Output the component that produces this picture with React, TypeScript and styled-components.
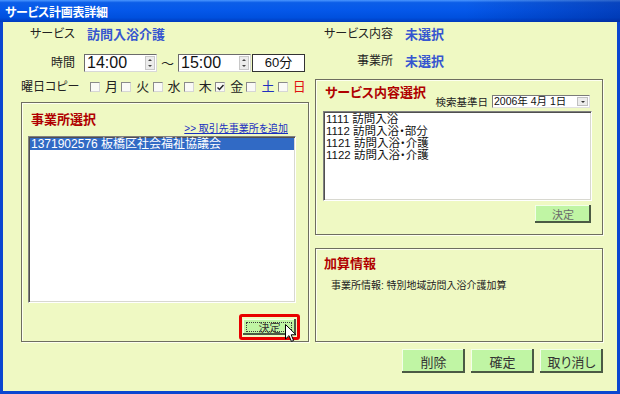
import styled, { createGlobalStyle } from "styled-components";

const GlobalStyle = createGlobalStyle`
  html, body {
    margin: 0;
    padding: 0;
  }
  body {
    width: 620px;
    height: 394px;
    overflow: hidden;
    font-family: "Liberation Sans", "Noto Sans CJK JP", sans-serif;
    font-feature-settings: "palt";
    color: #222;
  }
  * {
    box-sizing: border-box;
  }
`;

const Window = styled.div`
  width: 620px;
  height: 394px;
  display: flex;
  flex-direction: column;
  background: #0a46d0;
  padding: 0 3px 3px 3px;
`;

const TitleBar = styled.div`
  flex: none;
  height: 22px;
  margin: 0 -3px;
  padding-left: 5px;
  display: flex;
  align-items: center;
  background: linear-gradient(to right, rgba(0, 0, 0, 0) 75%, rgba(0, 20, 110, 0.35) 100%),
    linear-gradient(to bottom, #4a96ff 0%, #0c5ee8 12%, #0558ea 45%, #0050de 80%, #003cbe 100%);
  color: #fff;
  font-size: 12px;
  font-weight: bold;
  letter-spacing: -0.3px;
`;

const Body = styled.div`
  flex: 1;
  background: #eff9c3;
  padding: 2px 14px 0 18px;
  display: flex;
  flex-direction: column;
`;

const Columns = styled.div`
  display: grid;
  grid-template-columns: 288px 288px;
  column-gap: 6px;
`;

const Column = styled.div`
  display: flex;
  flex-direction: column;
`;

const FieldRow = styled.div<{ $top?: number; $h?: number }>`
  display: flex;
  align-items: center;
  height: ${(p) => p.$h ?? 20}px;
  margin-top: ${(p) => p.$top ?? 0}px;
`;

const Label = styled.div<{ $w: number; $gap: number }>`
  width: ${(p) => p.$w}px;
  margin-right: ${(p) => p.$gap}px;
  text-align: right;
  font-size: 12px;
  line-height: 14px;
  white-space: nowrap;
  color: #222;
`;

const Value = styled.div`
  font-size: 13px;
  font-weight: bold;
  line-height: 15px;
  color: #3656d0;
`;

const TimeBox = styled.div`
  width: 73px;
  height: 18px;
  background: #fff;
  border: 1px solid;
  border-color: #6b6b6b #d8d8d8 #d8d8d8 #6b6b6b;
  display: flex;
  align-items: center;
  padding-left: 2px;
  font-size: 16px;
  line-height: 16px;
  color: #111;
`;

const Spinner = styled.div`
  margin-left: auto;
  margin-right: 1px;
  width: 10px;
  height: 14px;
  display: flex;
  flex-direction: column;
  background: #ececec;
  border: 1px solid #c8c8c8;
`;

const SpinHalf = styled.div<{ $down?: boolean }>`
  flex: 1;
  display: flex;
  align-items: center;
  justify-content: center;
  &::after {
    content: "";
    border-left: 2px solid transparent;
    border-right: 2px solid transparent;
    ${(p) => (p.$down ? "border-top: 2px solid #444;" : "border-bottom: 2px solid #444;")}
  }
`;

const Tilde = styled.span`
  width: 21px;
  text-align: center;
  font-size: 13px;
  color: #222;
`;

const MinutesBox = styled.div`
  width: 53px;
  height: 18px;
  margin-left: 1px;
  background: #fff;
  border: 1px solid #333;
  font-size: 13px;
  line-height: 16px;
  text-align: center;
  color: #111;
`;

const DayItem = styled.label`
  width: 31.5px;
  display: flex;
  align-items: center;
  gap: 5px;
`;

const CheckBox = styled.span`
  width: 10px;
  height: 10px;
  flex: none;
  background: #fafaf6;
  border: 1px solid;
  border-color: #8a8a8a #d6d6d6 #d6d6d6 #8a8a8a;
  display: flex;
  align-items: center;
  justify-content: center;
`;

const DayChar = styled.span<{ $color?: string }>`
  font-size: 13px;
  line-height: 14px;
  color: ${(p) => p.$color ?? "#222"};
`;

const Panel = styled.div<{ $h: number; $top?: number }>`
  height: ${(p) => p.$h}px;
  margin-top: ${(p) => p.$top ?? 0}px;
  border: 1px solid #6e6e60;
  box-shadow: inset 1px 1px 0 #fdfff0, 1px 1px 0 #fdfff0;
  display: flex;
  flex-direction: column;
`;

const PanelHead = styled.div<{ $h: number }>`
  height: ${(p) => p.$h}px;
  display: flex;
  align-items: flex-end;
  justify-content: space-between;
  flex: none;
`;

const PanelTitle = styled.div<{ $left: number; $bottom: number; $top?: number }>`
  margin-left: ${(p) => p.$left}px;
  margin-bottom: ${(p) => p.$bottom}px;
  margin-top: ${(p) => p.$top ?? 0}px;
  font-size: 13px;
  font-weight: bold;
  line-height: 15px;
  color: #b00000;
  white-space: nowrap;
`;

const AddLink = styled.a`
  margin-right: 20px;
  margin-bottom: 2px;
  font-size: 10px;
  line-height: 11px;
  color: #1a2fc0;
  text-decoration: underline;
  white-space: nowrap;
`;

const ListBox = styled.div<{ $h: number; $l: number; $r: number }>`
  height: ${(p) => p.$h}px;
  margin: 0 ${(p) => p.$r}px 0 ${(p) => p.$l}px;
  background: #fff;
  border: 1px solid;
  border-color: #808080 #ffffff #ffffff #808080;
  box-shadow: inset 1px 1px 0 #505050, inset -1px -1px 0 #d8d8d0;
  padding: 1px;
  flex: none;
  overflow: hidden;
`;

const ListItem = styled.div<{ $selected?: boolean }>`
  font-size: ${(p) => (p.$selected ? "12px" : "11.5px")};
  line-height: 12px;
  padding-left: 1px;
  white-space: nowrap;
  color: ${(p) => (p.$selected ? "#fff" : "#111")};
  background: ${(p) => (p.$selected ? "#316ac5" : "transparent")};
`;

const ButtonRow = styled.div<{ $top: number; $right: number }>`
  display: flex;
  justify-content: flex-end;
  margin-top: ${(p) => p.$top}px;
  margin-right: ${(p) => p.$right}px;
`;

const GreenButton = styled.button<{ $w: number; $h: number; $muted?: boolean }>`
  position: relative;
  width: ${(p) => p.$w}px;
  height: ${(p) => p.$h}px;
  padding: 0;
  background: #c0f5a4;
  border: none;
  box-shadow: inset -2px -2px 0 #4b5a44, inset 1px 1px 0 #f2ffe8;
  font-family: inherit;
  font-feature-settings: "palt";
  font-size: ${(p) => (p.$h > 20 ? 13 : 11)}px;
  color: ${(p) => (p.$muted ? "#6a6a6a" : "#333")};
`;

const FocusRing = styled.div`
  position: relative;
  border: 3px solid #e80000;
  border-radius: 3px;
  padding: 1px;
`;

const FocusButton = styled(GreenButton)`
  &::before {
    content: "";
    position: absolute;
    inset: 3px 4px 3px 3px;
    border: 1px dotted #3c3c3c;
  }
`;

const Cursor = styled.svg`
  position: absolute;
  left: 43px;
  top: 7px;
`;

const Search = styled.div`
  display: flex;
  align-items: center;
  margin-right: 12px;
  margin-bottom: 3px;
`;

const SearchLabel = styled.span`
  font-size: 10.5px;
  line-height: 12px;
  margin-right: 4px;
  color: #222;
`;

const DateSelect = styled.div`
  width: 98px;
  height: 13px;
  background: #fff;
  border: 1px solid;
  border-color: #7a7a7a #e0e0e0 #e0e0e0 #7a7a7a;
  display: flex;
  align-items: center;
  font-size: 10.5px;
  line-height: 11px;
  padding-left: 1px;
  color: #111;
`;

const DropButton = styled.span`
  margin-left: auto;
  margin-right: 1px;
  width: 11px;
  height: 9px;
  background: #ececec;
  border: 1px solid #c0c0c0;
  display: flex;
  align-items: center;
  justify-content: center;
  &::after {
    content: "";
    border-left: 2px solid transparent;
    border-right: 2px solid transparent;
    border-top: 2px solid #333;
  }
`;

const InfoText = styled.div`
  margin: 9px 0 0 15px;
  font-size: 10px;
  line-height: 12px;
  color: #222;
`;

const Footer = styled.div`
  display: flex;
  justify-content: flex-end;
  gap: 6px;
  margin-top: 7px;
`;

const days: { ch: string; color?: string; checked?: boolean }[] = [
  { ch: "月" },
  { ch: "火" },
  { ch: "水" },
  { ch: "木" },
  { ch: "金", checked: true },
  { ch: "土", color: "#2030c0" },
  { ch: "日", color: "#e01010" },
];

const services = ["1111 訪問入浴", "1112 訪問入浴・部分", "1121 訪問入浴・介護", "1122 訪問入浴・介護"];

function TimeInput({ value }: { value: string }) {
  return (
    <TimeBox>
      {value}
      <Spinner>
        <SpinHalf />
        <SpinHalf $down />
      </Spinner>
    </TimeBox>
  );
}

export default function App() {
  return (
    <>
      <GlobalStyle />
      <Window>
        <TitleBar>サービス計画表詳細</TitleBar>
        <Body>
          <Columns>
            <Column>
              <FieldRow>
                <Label $w={54} $gap={12}>サービス</Label>
                <Value>訪問入浴介護</Value>
              </FieldRow>
              <FieldRow $top={9} $h={19}>
                <Label $w={54} $gap={9}>時間</Label>
                <TimeInput value="14:00" />
                <Tilde>～</Tilde>
                <TimeInput value="15:00" />
                <MinutesBox>60分</MinutesBox>
              </FieldRow>
              <FieldRow $top={5}>
                <Label $w={54} $gap={15}>曜日コピー</Label>
                {days.map((d) => (
                  <DayItem key={d.ch}>
                    <CheckBox>
                      {d.checked && (
                        <svg width="7" height="7" viewBox="0 0 7 7">
                          <path d="M0.5 3.5 L2.5 5.5 L6.5 1" fill="none" stroke="#222" strokeWidth="1.5" />
                        </svg>
                      )}
                    </CheckBox>
                    <DayChar $color={d.color}>{d.ch}</DayChar>
                  </DayItem>
                ))}
              </FieldRow>

              <Panel $h={240} $top={5}>
                <PanelHead $h={33}>
                  <PanelTitle $left={9} $bottom={9}>事業所選択</PanelTitle>
                  <AddLink href="#">&gt;&gt; 取引先事業所を追加</AddLink>
                </PanelHead>
                <ListBox $h={167} $l={6} $r={12}>
                  <ListItem $selected>1371902576 板橋区社会福祉協議会</ListItem>
                </ListBox>
                <ButtonRow $top={11} $right={8}>
                  <FocusRing>
                    <FocusButton $w={53} $h={16}>決定</FocusButton>
                    <Cursor width="12" height="19" viewBox="0 0 12 19">
                      <path
                        d="M0.5 0.5 L0.5 15 L4 11.6 L6.4 17.4 L8.6 16.5 L6.2 10.8 L11 10.8 Z"
                        fill="#fff"
                        stroke="#000"
                        strokeWidth="1"
                        strokeLinejoin="round"
                      />
                    </Cursor>
                  </FocusRing>
                </ButtonRow>
              </Panel>
            </Column>

            <Column>
              <FieldRow>
                <Label $w={78} $gap={12}>サービス内容</Label>
                <Value>未選択</Value>
              </FieldRow>
              <FieldRow $top={7}>
                <Label $w={78} $gap={12}>事業所</Label>
                <Value>未選択</Value>
              </FieldRow>

              <Panel $h={156} $top={8}>
                <PanelHead $h={31}>
                  <PanelTitle $left={9} $bottom={11}>サービス内容選択</PanelTitle>
                  <Search>
                    <SearchLabel>検索基準日</SearchLabel>
                    <DateSelect>
                      2006年 4月 1日
                      <DropButton />
                    </DateSelect>
                  </Search>
                </PanelHead>
                <ListBox $h={90} $l={7} $r={10}>
                  {services.map((s) => (
                    <ListItem key={s}>{s}</ListItem>
                  ))}
                </ListBox>
                <ButtonRow $top={4} $right={11}>
                  <GreenButton $w={56} $h={18} $muted>
                    決定
                  </GreenButton>
                </ButtonRow>
              </Panel>

              <Panel $h={94} $top={13}>
                <PanelTitle $left={8} $bottom={0} $top={7}>
                  加算情報
                </PanelTitle>
                <InfoText>事業所情報: 特別地域訪問入浴介護加算</InfoText>
              </Panel>
            </Column>
          </Columns>

          <Footer>
            <GreenButton $w={63} $h={24}>削除</GreenButton>
            <GreenButton $w={63} $h={24}>確定</GreenButton>
            <GreenButton $w={63} $h={24}>取り消し</GreenButton>
          </Footer>
        </Body>
      </Window>
    </>
  );
}
